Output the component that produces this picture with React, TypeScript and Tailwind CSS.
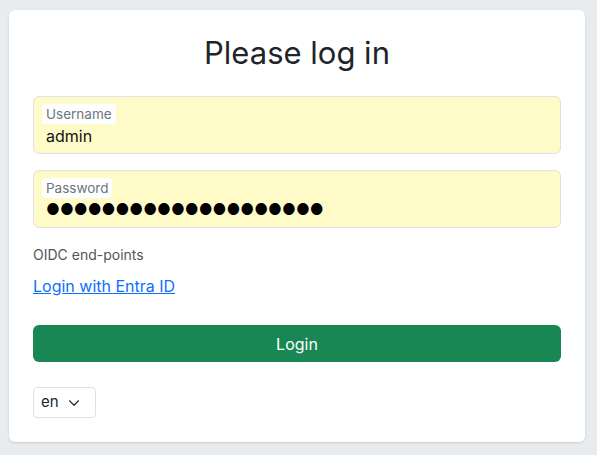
import { ChevronDown } from 'lucide-react';

function Field({ label, value, dots }: { label: string; value: string; dots?: boolean }) {
  return (
    <div className="flex h-[58px] flex-col rounded-md border border-[#dee2e6] bg-[#fffbc8] px-2 pt-[7px]">
      <span className="self-start rounded-[4px] bg-white px-1 text-[13.5px] leading-5 text-[#6c757d]">{label}</span>
      <span
        className={
          dots
            ? 'px-1 text-[15.2px] leading-6 text-black'
            : 'px-1 text-[16px] leading-6 text-[#111]'
        }
      >
        {value}
      </span>
    </div>
  );
}

export default function App() {
  return (
    <div className="min-h-[455px] bg-[#e9ecef] pb-[13px] pl-[9px] pr-[12px] pt-[10px] font-['Inter',sans-serif]">
      <div className="flex flex-col rounded-md bg-white px-6 pb-6 pt-6 shadow-sm">
        <h1 className="mb-6 text-center text-[31px] leading-[38px] text-[#212529]">Please log in</h1>

        <div className="flex flex-col gap-4">
          <Field label="Username" value="admin" />
          <Field label="Password" value={'●'.repeat(20)} dots />
        </div>

        <p className="mt-4 text-[14px] leading-[21px] text-[#555]">OIDC end-points</p>
        <a href="#" className="mt-[9px] self-start text-[16px] leading-6 text-[#0d6efd] underline">
          Login with Entra ID
        </a>

        <button
          type="button"
          className="mt-[27px] h-[37px] rounded-md bg-[#198754] text-[16px] text-white"
        >
          Login
        </button>

        <div className="mt-[25px] flex h-[31px] w-[63px] items-center gap-[6px] rounded-[4px] border border-[#dee2e6] pl-[7px] text-[15px] text-[#212529]">
          <span>en</span>
          <ChevronDown size={18} strokeWidth={1.5} />
        </div>
      </div>
    </div>
  );
}
